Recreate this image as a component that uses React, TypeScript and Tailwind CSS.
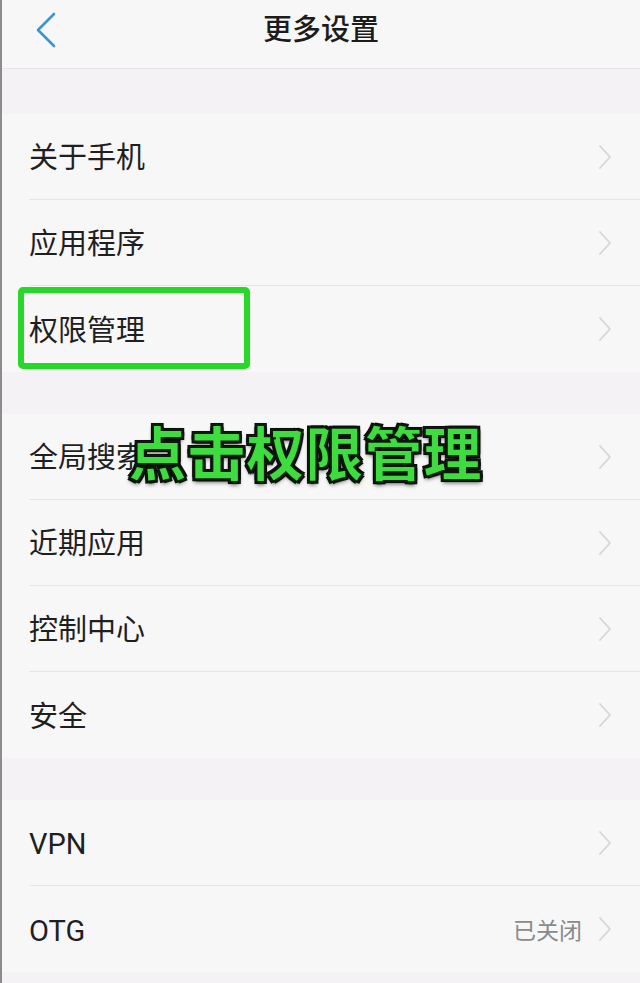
type Row = { label: string; value?: string }

const groups: Row[][] = [
  [{ label: '关于手机' }, { label: '应用程序' }, { label: '权限管理' }],
  [{ label: '全局搜索' }, { label: '近期应用' }, { label: '控制中心' }, { label: '安全' }],
  [{ label: 'VPN' }, { label: 'OTG', value: '已关闭' }],
]

function Chevron() {
  return (
    <svg width="14" height="26" viewBox="0 0 14 26" fill="none" className="shrink-0">
      <path d="M2 2 L12 13 L2 24" stroke="#d6d4d9" strokeWidth="1.8" strokeLinecap="round" strokeLinejoin="round" />
    </svg>
  )
}

function SettingRow({ row, last }: { row: Row; last: boolean }) {
  return (
    <div className="h-[86px] pl-[27px] bg-[#f7f7f7]">
      <div className={`h-full flex items-center pr-[28px] ${last ? '' : 'border-b border-[#e7e5ea]'}`}>
        <span className="flex-1 pt-[4px] text-[29px] text-[#1f1f1f] leading-none">{row.label}</span>
        {row.value && <span className="pt-[4px] text-[23px] text-[#8a8a8a] mr-[16px] leading-none">{row.value}</span>}
        <Chevron />
      </div>
    </div>
  )
}

export default function App() {
  return (
    <div
      className="relative w-[640px] h-[983px] overflow-hidden bg-[#f4f2f5] border-l-2 border-[#8c8c8c]"
      style={{ fontFamily: 'Roboto, "Noto Sans CJK SC", "Noto Sans", sans-serif' }}
    >
      {/* Header */}
      <div className="h-[69px] bg-[#f7f7f7] border-b border-[#e6e4e8] flex items-center pb-[8px] relative">
        <svg className="absolute left-[31px] top-[10px]" width="26" height="40" viewBox="0 0 26 40" fill="none">
          <path d="M21 4 L5 20 L21 36" stroke="#3f93cf" strokeWidth="2.6" strokeLinecap="round" strokeLinejoin="round" />
        </svg>
        <div className="flex-1 text-center text-[29px] font-medium text-[#1c1c1c] leading-none">更多设置</div>
      </div>

      {groups.map((g, gi) => (
        <div key={gi} className={gi === 0 ? 'mt-[45px]' : 'mt-[42px]'}>
          {g.map((r, i) => (
            <SettingRow key={r.label} row={r} last={i === g.length - 1} />
          ))}
        </div>
      ))}

      {/* Highlight box */}
      <div className="absolute left-[16px] top-[287px] w-[232px] h-[82px] border-[6px] border-[#28d828] rounded-[5px]" />

      {/* Caption overlay */}
      <div
        className="absolute left-[126px] top-[421px] text-[59px] font-black text-[#3fdc3f] leading-none"
        style={{
          fontFamily: '"Noto Sans CJK SC", sans-serif',
          WebkitTextStroke: '2px #0c1a0c',
          textShadow:
            '0 0 3px #000, 2px 2px 0 #111, -2px -2px 0 #111, 2px -2px 0 #111, -2px 2px 0 #111, 0 3px 4px rgba(0,0,0,0.6)',
        }}
      >
        点击权限管理
      </div>
    </div>
  )
}
